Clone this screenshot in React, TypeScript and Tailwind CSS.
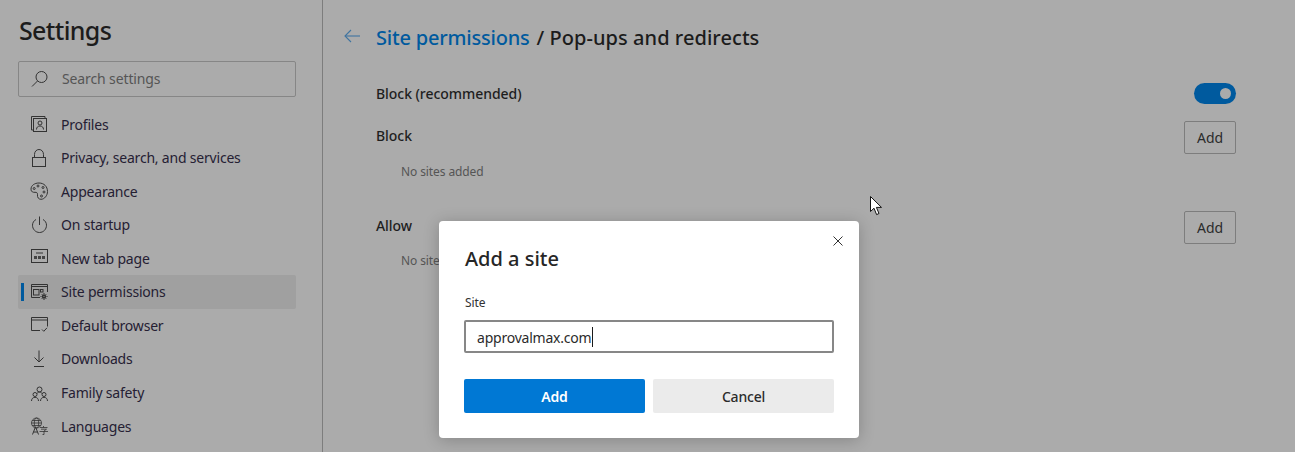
import React from 'react';

const iconProps = {
  width: 20,
  height: 20,
  viewBox: '0 0 20 20',
  fill: 'none',
  stroke: '#333333',
  strokeWidth: 1,
};

const ProfilesIcon = () => (
  <svg {...iconProps}>
    <path d="M4.5 16H2.5V2.5H16V4.5" />
    <rect x="4.5" y="4.5" width="13" height="13" />
    <circle cx="11" cy="9" r="2" />
    <path d="M7.5 15.5C7.5 13.2 9 12 11 12C13 12 14.5 13.2 14.5 15.5" />
  </svg>
);

const LockIcon = () => (
  <svg {...iconProps}>
    <path d="M5.5 9.5V6.5C5.5 3.5 7.5 1.5 10 1.5C12.5 1.5 14.5 3.5 14.5 6.5V9.5" />
    <rect x="3.5" y="9.5" width="13" height="9" />
  </svg>
);

const PaletteIcon = () => (
  <svg {...iconProps}>
    <path d="M10 2C5.5 2 2 4.5 2 8.2C2 11 4.2 11.5 6 11.3C8 11.1 8.7 12.2 8.5 13.8C8.2 16.3 9.5 18.3 12 18.3C15.5 18.3 18.5 14.5 18.5 10.5C18.5 5.5 15 2 10 2Z" />
    <circle cx="5.2" cy="7.5" r="1" />
    <circle cx="9" cy="5" r="1" />
    <circle cx="14" cy="6.5" r="1" />
    <circle cx="15" cy="11" r="1" />
    <circle cx="12.5" cy="15" r="1" />
  </svg>
);

const PowerIcon = () => (
  <svg {...iconProps}>
    <path d="M10.5 1.5V10" />
    <path d="M7 4.5C4.8 5.7 3.5 7.8 3.5 10.2C3.5 14.3 6.6 17.5 10.5 17.5C14.4 17.5 17.5 14.3 17.5 10.2C17.5 7.8 16.2 5.7 14 4.5" />
  </svg>
);

const NewTabIcon = () => (
  <svg {...iconProps}>
    <rect x="2.5" y="1.5" width="16" height="13" />
    <path d="M7 5H14" />
    <rect x="5" y="8" width="3" height="3" fill="#444444" stroke="none" />
    <rect x="9" y="8" width="3" height="3" fill="#444444" stroke="none" />
    <rect x="13" y="8" width="3" height="3" fill="#444444" stroke="none" />
  </svg>
);

const SitePermissionsIcon = () => (
  <svg {...iconProps}>
    <path d="M11 15.5H2.5V2.5H18.5V10" />
    <path d="M2.5 4.5H18.5" />
    <rect x="4.5" y="7.5" width="5.5" height="5.5" />
    <rect x="11.5" y="7.5" width="2.5" height="2.5" />
    <circle cx="15" cy="14.5" r="1.4" strokeWidth="1.6" />
    <path d="M15 11V12M15 17V18M11.5 14.5H12.5M17.5 14.5H18.5M12.6 12.1L13.3 12.8M16.7 16.2L17.4 16.9M17.4 12.1L16.7 12.8M13.3 16.2L12.6 16.9" />
  </svg>
);

const DefaultBrowserIcon = () => (
  <svg {...iconProps}>
    <path d="M11 15.5H2.5V2.5H18.5V11.5" />
    <path d="M2.5 5H18.5" />
    <path d="M13 14.5L14.8 16.3L18 12.8" />
  </svg>
);

const DownloadIcon = () => (
  <svg {...iconProps}>
    <path d="M10 1.5V13" />
    <path d="M5.5 8.5L10 13L14.5 8.5" />
    <path d="M5 17.5H15" />
  </svg>
);

const FamilyIcon = () => (
  <svg {...iconProps}>
    <circle cx="10.5" cy="6.5" r="2.5" />
    <circle cx="6" cy="11.5" r="2" />
    <circle cx="15" cy="11.5" r="2" />
    <path d="M2.5 18C2.5 15.8 4 14.3 6 14.3C8 14.3 9.5 15.8 9.5 18" />
    <path d="M11.5 18C11.5 15.8 13 14.3 15 14.3C17 14.3 18.5 15.8 18.5 18" />
    <path d="M8 10.5C8.5 9.5 9.5 9 10.5 9C11.5 9 12.5 9.5 13 10.5" />
  </svg>
);

const LanguagesIcon = () => (
  <svg {...iconProps} strokeWidth="0.8">
    <circle cx="7.5" cy="7" r="5" />
    <ellipse cx="7.5" cy="7" rx="2.2" ry="5" />
    <path d="M2.5 7H12.5M3.2 4.5H11.8M3.2 9.5H11.8" />
    <path d="M3.5 18.5L6.5 10.8L9.5 18.5M4.6 16H8.4" strokeWidth="1" />
    <path d="M11 11.5H18.5M14.5 10V11.5M12 13.2H17.5L15 15M10.5 15.5H19M15 15V18.5H13.5" />
  </svg>
);

const navItems = [
  { label: 'Profiles', icon: <ProfilesIcon /> },
  { label: 'Privacy, search, and services', icon: <LockIcon /> },
  { label: 'Appearance', icon: <PaletteIcon /> },
  { label: 'On startup', icon: <PowerIcon /> },
  { label: 'New tab page', icon: <NewTabIcon /> },
  { label: 'Site permissions', icon: <SitePermissionsIcon />, active: true },
  { label: 'Default browser', icon: <DefaultBrowserIcon /> },
  { label: 'Downloads', icon: <DownloadIcon /> },
  { label: 'Family safety', icon: <FamilyIcon /> },
  { label: 'Languages', icon: <LanguagesIcon /> },
];

const Sidebar = () => (
  <aside className="w-[323px] shrink-0 border-r border-[#7d7d7d] pl-[18px] pr-[26px]">
    <h1 className="h-[61px] pt-[10px] pl-px text-[25px] leading-[40px] font-medium tracking-[-0.65px] text-[#1c1c1c]">
      Settings
    </h1>
    <div className="flex h-[36px] items-center rounded-[2px] border border-[#868686] pb-[2px] pl-[12px]">
      <svg className="mt-[2px]" width="18" height="18" viewBox="0 0 18 18" fill="none" stroke="#333333" strokeWidth="1">
        <circle cx="10.5" cy="7" r="5.5" />
        <path d="M6.5 11L1 16.5" />
      </svg>
      <span className="ml-[13px] text-[14px] tracking-[-0.12px] text-[#555555]">Search settings</span>
    </div>
    <nav className="mt-[10.4px]">
      {navItems.map((item) => (
        <div
          key={item.label}
          className={`relative flex h-[33.55px] items-center gap-[12px] rounded-[2px] pl-[11px] ${item.active ? 'bg-[#a0a0a0]' : ''}`}
        >
          {item.active && <span className="absolute left-[3px] top-[8px] h-[18px] w-[3px] bg-[#005a9e]" />}
          {item.icon}
          <span className="text-[14px] tracking-[-0.2px] text-[#252033]">{item.label}</span>
        </div>
      ))}
    </nav>
  </aside>
);

const OutlineAdd = () => (
  <button className="flex h-[33px] w-[52px] items-center justify-center rounded-[2px] border border-[#7d7d7d] text-[14px] tracking-[-0.1px] text-[#2b2b2b]">
    Add
  </button>
);

const Content = () => (
  <main className="min-w-0 flex-1 pl-[21px] pr-[59px]">
    <div className="flex h-[75px] items-center">
      <svg className="mb-[3px]" width="16" height="14" viewBox="0 0 16 14" fill="none" stroke="#3f74a0" strokeWidth="1.1">
        <path d="M16 7H1" />
        <path d="M7 1L1 7L7 13" />
      </svg>
      <h2 className="ml-[16px] text-[20px] font-medium text-[#1c1c1c]">
        <span className="tracking-[-0.2px] text-[#005a9e]">Site permissions</span>
        <span className="ml-[7px] tracking-[0.05px]">/ Pop-ups and redirects</span>
      </h2>
    </div>
    <div className="pl-[32px]">
      <div className="flex h-[36px] items-center justify-between">
        <span className="text-[14px] font-medium tracking-[-0.05px] text-[#1e1e1e]">Block (recommended)</span>
        <div className="flex h-[21px] w-[42px] items-center justify-end rounded-full bg-[#005a9e] pr-[5px]">
          <span className="size-[11px] rounded-full bg-[#ababab]" />
        </div>
      </div>
      <div className="mt-[10px] flex items-center justify-between">
        <span className="pb-[4px] text-[14px] font-medium tracking-[-0.05px] text-[#1e1e1e]">Block</span>
        <OutlineAdd />
      </div>
      <p className="mt-[8px] pl-[25px] text-[12px] leading-[20px] tracking-[-0.1px] text-[#555555]">No sites added</p>
      <div className="mt-[29px] flex items-center justify-between">
        <span className="pb-[4px] text-[14px] font-medium tracking-[-0.05px] text-[#1e1e1e]">Allow</span>
        <OutlineAdd />
      </div>
      <p className="mt-[7px] pl-[25px] text-[12px] leading-[20px] tracking-[-0.1px] text-[#555555]">No sites added</p>
    </div>
  </main>
);

const AddSiteDialog = () => (
  <div className="absolute left-[439px] top-[221px] h-[217px] w-[420px] rounded-[4px] bg-white px-[25px] pt-[25px] shadow-[0_2px_16px_rgba(0,0,0,0.22)]">
    <button className="absolute right-[16px] top-[15px]">
      <svg width="10" height="10" viewBox="0 0 10 10" fill="none" stroke="#333333" strokeWidth="1">
        <path d="M0.5 0.5L9.5 9.5M9.5 0.5L0.5 9.5" />
      </svg>
    </button>
    <h3 className="pl-px text-[20px] leading-[26px] font-medium tracking-[0px] text-[#262626]">Add a site</h3>
    <label className="mt-[23px] block pl-px text-[12px] leading-[16px] tracking-[-0.1px] text-[#333333]">Site</label>
    <div className="mt-[9px] flex h-[33px] items-center rounded-[2px] border-2 border-[#878787] pl-[11px]">
      <span className="pt-px text-[14px] tracking-[-0.22px] text-[#2b2b2b]">approvalmax.com</span>
      <span className="ml-px h-[20px] w-px bg-[#1a1a1a]" />
    </div>
    <div className="mt-[26px] flex gap-[8px]">
      <button className="h-[34px] flex-1 rounded-[2px] bg-[#0078d4] text-[14px] font-semibold tracking-[-0.2px] text-white">
        Add
      </button>
      <button className="h-[34px] flex-1 rounded-[2px] bg-[#ebebeb] text-[14px] font-medium tracking-[-0.2px] text-[#2b2b2b]">
        Cancel
      </button>
    </div>
  </div>
);

const Cursor = () => (
  <svg className="absolute left-[870px] top-[196px]" width="13" height="20" viewBox="0 0 13 20">
    <path d="M0.5 0.5V15.5L4 12.2L6.6 18.6L9 17.5L6.4 11.4H11.5Z" fill="#ffffff" stroke="#111111" strokeWidth="1" />
  </svg>
);

export default function App() {
  return (
    <div className="relative flex h-[452px] w-[1295px] overflow-hidden bg-[#ababab] font-['Noto_Sans',sans-serif]">
      <Sidebar />
      <Content />
      <AddSiteDialog />
      <Cursor />
    </div>
  );
}
